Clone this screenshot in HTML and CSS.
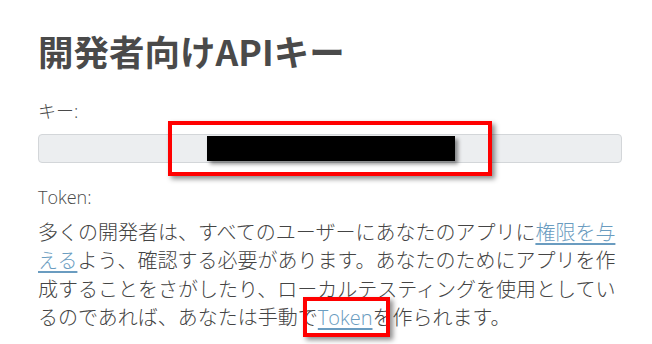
FILE: index.html
```html
<!DOCTYPE html>
<html lang="ja">
<head>
<meta charset="utf-8">
<link rel="stylesheet" href="styles.css">
</head>
<body>
<main class="page">
  <h1 class="title">開発者向けAPIキー</h1>
  <div class="field">
    <label class="field-label" for="key">キー:</label>
    <div class="key-input" id="key"></div>
  </div>
  <div class="field">
    <div class="field-label">Token:</div>
    <p class="desc">多くの開発者は、すべてのユーザーにあなたのアプリに<a href="#" class="link">権限を与える</a>よう、確認する必要があります。あなたのためにアプリを作成することをさがしたり、ローカルテスティングを使用としているのであれば、あなたは手動で<a href="#" class="link">Token</a>を作られます。</p>
  </div>
  <div class="redact"></div>
  <div class="mark mark-key"></div>
  <div class="mark mark-token"></div>
</main>
</body>
</html>
```
FILE: styles.css
```css
html, body {
  margin: 0;
  padding: 0;
  background: #ffffff;
}
.page {
  position: relative;
  width: 584px;
  height: 344px;
  padding: 0 30px 0 38px;
  font-family: "Open Sans", "Noto Sans CJK JP", sans-serif;
  font-weight: 300;
  color: #454545;
  overflow: hidden;
}
.title {
  margin: 0;
  padding-top: 29px;
  font-family: "Noto Sans CJK JP", sans-serif;
  font-size: 35.5px;
  font-weight: 700;
  line-height: 44px;
  color: #4a4a4a;
}
.field-label {
  display: block;
  font-size: 18px;
  line-height: 24px;
  color: #4a4a4a;
}
.field:first-of-type {
  margin-top: 26px;
}
.key-input {
  margin-top: 11px;
  height: 27px;
  background: #eceef0;
  border: 1px solid #d3d6d9;
  border-radius: 4px;
}
.field + .field {
  margin-top: 22px;
}
.desc {
  margin: 10px 0 0;
  font-size: 20px;
  line-height: 28.4px;
  color: #444;
}
.link {
  color: #6a9cc0;
  text-decoration: underline;
  text-underline-offset: 3px;
}
.redact {
  position: absolute;
  left: 207px;
  top: 136px;
  width: 248px;
  height: 25px;
  background: #000;
  box-shadow: 3px 3px 4px rgba(0,0,0,0.45);
}
.mark {
  position: absolute;
  border: 4px solid #ff0000;
  box-shadow: 3px 3px 5px rgba(0,0,0,0.45);
  box-sizing: border-box;
}
.mark-key {
  left: 168px;
  top: 121px;
  width: 324px;
  height: 55px;
}
.mark-token {
  left: 303px;
  top: 297px;
  width: 87px;
  height: 40px;
}
```
